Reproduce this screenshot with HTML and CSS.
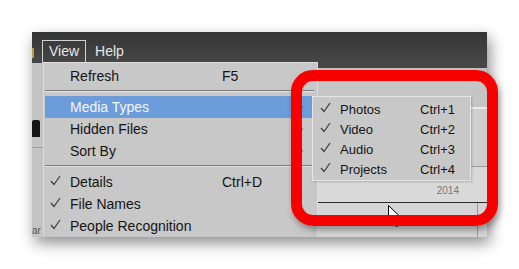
FILE: index.html
```html
<!DOCTYPE html>
<html lang="en">
<head>
  <meta charset="UTF-8">
  <title>View menu - Media Types</title>
  <link rel="stylesheet" href="styles.css">
</head>
<body>
  <div class="screen">
    <div class="window">
      <!-- Menu bar -->
      <div class="menubar">
        <span class="mark"></span>
        <span class="menu-title open">View</span>
        <span class="menu-title">Help</span>
      </div>

      <div class="workspace">
        <div class="sidebar">
          <div class="side-icon"></div>
          <div class="side-rule"></div>
          <div class="side-fill"></div>
          <div class="side-text">ar</div>
        </div>
        <div class="panel">
          <div class="panel-strip"></div>
          <div class="toolbar"></div>
          <div class="timeline-top"></div>
          <div class="ruler"><span class="year">2014</span></div>
          <div class="lower">
            <div class="lower-fill"></div>
            <div class="lower-cell"></div>
          </div>
        </div>
      </div>

      <!-- View dropdown -->
      <div class="dropdown">
        <div class="item"><span class="check"></span><span class="label">Refresh</span><span class="key">F5</span></div>
        <div class="sep"></div>
        <div class="item active"><span class="check"></span><span class="label">Media Types</span><span class="arrow"></span></div>
        <div class="item"><span class="check"></span><span class="label">Hidden Files</span><span class="arrow"></span></div>
        <div class="item"><span class="check"></span><span class="label">Sort By</span><span class="arrow"></span></div>
        <div class="sep"></div>
        <div class="item">
          <span class="check"><svg width="11" height="11" viewBox="0 0 11 11"><polyline points="1,6 4,9.5 10,1" /></svg></span>
          <span class="label">Details</span><span class="key">Ctrl+D</span>
        </div>
        <div class="item">
          <span class="check"><svg width="11" height="11" viewBox="0 0 11 11"><polyline points="1,6 4,9.5 10,1" /></svg></span>
          <span class="label">File Names</span>
        </div>
        <div class="item">
          <span class="check"><svg width="11" height="11" viewBox="0 0 11 11"><polyline points="1,6 4,9.5 10,1" /></svg></span>
          <span class="label">People Recognition</span>
        </div>
      </div>

      <!-- Media Types submenu -->
      <div class="submenu">
        <div class="sub-item">
          <span class="sub-check"><svg width="11" height="11" viewBox="0 0 11 11"><polyline points="1,6 4,9.5 10,1" /></svg></span>
          <span class="sub-label">Photos</span><span class="key">Ctrl+1</span>
        </div>
        <div class="sub-item">
          <span class="sub-check"><svg width="11" height="11" viewBox="0 0 11 11"><polyline points="1,6 4,9.5 10,1" /></svg></span>
          <span class="sub-label">Video</span><span class="key">Ctrl+2</span>
        </div>
        <div class="sub-item">
          <span class="sub-check"><svg width="11" height="11" viewBox="0 0 11 11"><polyline points="1,6 4,9.5 10,1" /></svg></span>
          <span class="sub-label">Audio</span><span class="key">Ctrl+3</span>
        </div>
        <div class="sub-item">
          <span class="sub-check"><svg width="11" height="11" viewBox="0 0 11 11"><polyline points="1,6 4,9.5 10,1" /></svg></span>
          <span class="sub-label">Projects</span><span class="key">Ctrl+4</span>
        </div>
      </div>

      <!-- Mouse pointer -->
      <svg class="pointer" width="14" height="23" viewBox="0 0 14 23">
        <path d="M0.5 0.5 L0.5 17.5 L4.6 13.6 L8 21.5 L10.8 20.3 L7.5 12.6 L13 12.6 Z" fill="#fff" stroke="#000" stroke-width="1" stroke-linejoin="round" />
      </svg>
    </div>

    <!-- Red highlight frame -->
    <div class="callout"></div>
  </div>
</body>
</html>
```
FILE: styles.css
```css
* { margin: 0; padding: 0; box-sizing: border-box; }
body {
  background: #fff;
  font-family: "Liberation Sans", Arial, sans-serif;
  font-size: 14px;
  color: #141414;
}
.screen {
  position: relative;
  width: 519px;
  height: 269px;
  overflow: hidden;
}

/* App window */
.window {
  position: relative;
  margin: 32px 0 0 32px;
  width: 455px;
  height: 205px;
  overflow: hidden;
  background: #c6c6c6;
  box-shadow: 3px 6px 14px rgba(0,0,0,0.45);
}
.menubar {
  height: 31px;
  display: flex;
  align-items: flex-start;
  padding-top: 8px;
  background: linear-gradient(#353535, #474747);
}
.mark {
  width: 2px;
  height: 10px;
  margin: 8px 8px 0 0;
  background: #b89a4a;
}
.menu-title {
  height: 23px;
  line-height: 21px;
  padding: 0 6px;
  color: #e6e6e6;
  border: 1px solid transparent;
  border-bottom: none;
}
.menu-title.open { border-color: #d2d2d2; }
.menu-title + .menu-title { margin-left: 2px; }

.workspace {
  display: flex;
  height: 174px;
}
.sidebar {
  width: 11px;
  display: flex;
  flex-direction: column;
  padding-top: 57px;
  background: #c4c4c4;
}
.side-icon {
  width: 8px;
  height: 17px;
  background: #151515;
  border-radius: 2px 2px 0 0;
}
.side-rule {
  height: 1px;
  margin-top: 10px;
  background: #9c9c9c;
}
.side-fill { flex: 1; }
.side-text {
  font-size: 10px;
  line-height: 10px;
  height: 11px;
  padding-bottom: 1px;
  color: #555;
  white-space: nowrap;
}
.panel {
  flex: 1;
  display: flex;
  flex-direction: column;
}
.panel-strip { height: 5px; background: #474747; }
.toolbar { height: 39px; background: #c5c5c5; }
.timeline-top {
  height: 60px;
  background: #cfcfcf;
  border-top: 2px solid #ececec;
  border-bottom: 1px solid #9a9a9a;
}
.ruler {
  height: 36px;
  display: flex;
  align-items: flex-end;
  justify-content: flex-end;
  background: #d9d9d9;
  border-bottom: 1px solid #2c2c2c;
}
.year {
  font-size: 10px;
  color: #777;
  margin: 0 28px 6px 0;
}
.lower {
  flex: 1;
  display: flex;
  background: #d5d5d5;
}
.lower-fill { flex: 1; }
.lower-cell { width: 10px; border-left: 1px solid #9a9a9a; }

/* Dropdown */
.dropdown {
  position: absolute;
  left: 11px;
  top: 30px;
  width: 275px;
  padding: 2px 3px 0 1px;
  background: #c8c8c8;
  border: 1px solid #dcdcdc;
}
.item {
  height: 22px;
  display: flex;
  align-items: center;
}
.item.active {
  background: #6c9dda;
  color: #f6f6f6;
}
.check {
  width: 25px;
  height: 22px;
  display: flex;
  align-items: center;
  padding: 0 0 3px 5px;
}
.check svg polyline, .sub-check svg polyline {
  fill: none;
  stroke: #3c3c3c;
  stroke-width: 1.2;
}
.label { width: 152px; }
.arrow {
  margin: 0 11px 0 auto;
  width: 0;
  height: 0;
  border-top: 3px solid transparent;
  border-bottom: 3px solid transparent;
  border-left: 3px solid #444;
}
.sep {
  height: 1px;
  margin: 3px 0 5px;
  background: #7c7c7c;
  box-shadow: 0 1px 0 #e2e2e2;
}

/* Submenu */
.submenu {
  position: absolute;
  left: 280px;
  top: 64px;
  width: 159px;
  height: 85px;
  padding-top: 2px;
  font-size: 13px;
  background: #c8c8c8;
  border: 1px solid #e6e6e6;
  box-shadow: 1px 1px 2px rgba(0,0,0,0.2);
}
.sub-item {
  height: 20px;
  display: flex;
  align-items: center;
}
.sub-check {
  width: 27px;
  height: 20px;
  display: flex;
  align-items: center;
  padding: 0 0 3px 7px;
}
.sub-label { width: 80px; }

.pointer {
  position: absolute;
  left: 356px;
  top: 173px;
}

/* Annotation */
.callout {
  position: absolute;
  left: 291px;
  top: 70px;
  width: 207px;
  height: 156px;
  border: 11px solid #f70000;
  border-radius: 22px;
  box-shadow: 2px 4px 6px rgba(0,0,0,0.35);
}
```
